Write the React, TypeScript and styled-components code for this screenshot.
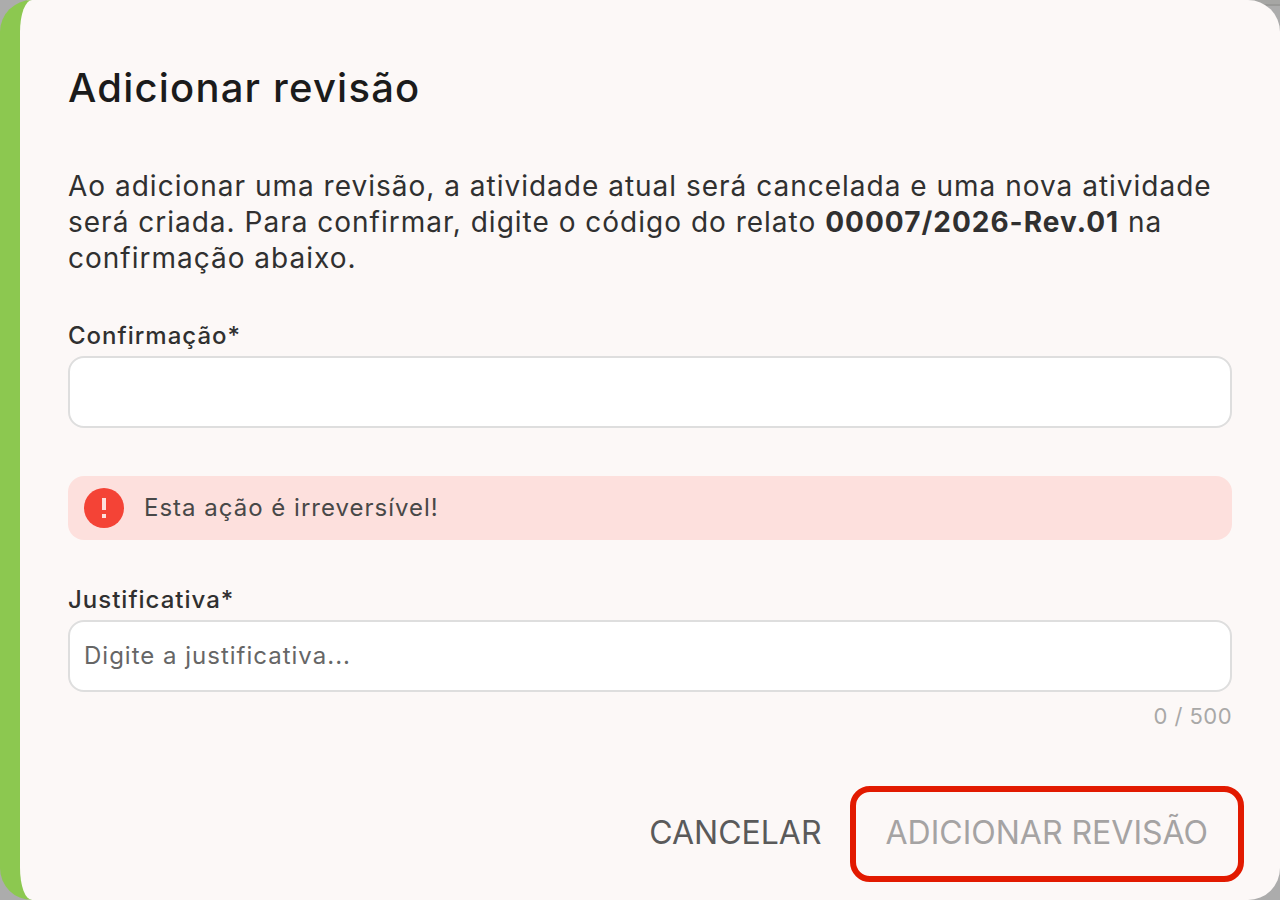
import React, { useState } from "react";
import styled, { createGlobalStyle } from "styled-components";

const GlobalStyle = createGlobalStyle`
  *, *::before, *::after { box-sizing: border-box; }
  body { margin: 0; background: #acacac; font-family: Inter, sans-serif; }
  h1, p { margin: 0; }
`;

const Backdrop = styled.div`
  background:
    linear-gradient(#a6a6a4 0 4px, #999997 4px 6px, transparent 6px) right top / 50% 6px no-repeat,
    #acacac;
`;

const Dialog = styled.form`
  display: flex;
  flex-direction: column;
  min-height: 100vh;
  padding: 60px 48px 18px;
  border-left: 20px solid #8cc850;
  border-radius: 32px;
  background: #fcf8f7;
  color: #303030;
  letter-spacing: 1px;
`;

const Title = styled.h1`
  margin-bottom: 52px;
  color: #1b1b1b;
  font-size: 40px;
  line-height: 56px;
  font-weight: 500;
  letter-spacing: 0.03em;
`;

const Message = styled.p`
  margin-bottom: 40px;
  font-size: 28px;
  line-height: 36px;
`;

const Field = styled.div`
  display: flex;
  flex-direction: column;
`;

const Label = styled.label`
  font-size: 24px;
  line-height: 40px;
  font-weight: 500;
`;

const TextInput = styled.input`
  width: 100%;
  height: 72px;
  padding: 0 14px 2px;
  border: 2px solid #dedede;
  border-radius: 16px;
  outline: none;
  background: #fff;
  color: #303030;
  font: 400 24px Inter, sans-serif;
  letter-spacing: 1px;
  &::placeholder { color: #666; opacity: 1; }
`;

const Counter = styled.span`
  align-self: flex-end;
  margin-top: 8px;
  color: #a9a8a7;
  font-size: 22px;
  line-height: 32px;
  letter-spacing: 0.02em;
`;

const Alert = styled.div`
  display: flex;
  align-items: center;
  gap: 20px;
  height: 64px;
  margin: 48px 0 40px;
  padding: 0 16px;
  border-radius: 16px;
  background: #fde0dd;
  color: #484848;
  font-size: 24px;
  line-height: 32px;
`;

const Actions = styled.div`
  display: flex;
  justify-content: flex-end;
  align-items: center;
  gap: 28px;
  margin: auto -12px 0 0;
`;

const Button = styled.button`
  padding: 0 0 4px;
  border: 0;
  background: transparent;
  color: #5a5a5a;
  font: 400 32px Inter, sans-serif;
`;

const SubmitButton = styled(Button)`
  height: 96px;
  padding: 0 30px 4px;
  border: 6px solid #e21a00;
  border-radius: 20px;
  color: #a5a3a3;
`;

export default function App() {
  const [code, setCode] = useState("");
  const [reason, setReason] = useState("");
  return (
    <Backdrop>
      <GlobalStyle />
      <Dialog role="dialog" aria-labelledby="title">
        <Title id="title">Adicionar revisão</Title>
        <Message>
          Ao adicionar uma revisão, a atividade atual será cancelada e uma nova atividade
          será criada. Para confirmar, digite o código do relato <b>00007/2026-Rev.01</b> na
          confirmação abaixo.
        </Message>
        <Field>
          <Label htmlFor="code">Confirmação*</Label>
          <TextInput id="code" value={code} onChange={(e) => setCode(e.target.value)} />
        </Field>
        <Alert role="alert">
          <svg width="40" height="40" viewBox="0 0 40 40" aria-hidden="true">
            <circle cx="20" cy="20" r="20" fill="#f44336" />
            <path d="M18 10h4v12h-4zM18 26h4v4h-4z" fill="#fde0dd" />
          </svg>
          Esta ação é irreversível!
        </Alert>
        <Field>
          <Label htmlFor="reason">Justificativa*</Label>
          <TextInput
            id="reason"
            maxLength={500}
            placeholder="Digite a justificativa..."
            value={reason}
            onChange={(e) => setReason(e.target.value)}
          />
          <Counter>{reason.length} / 500</Counter>
        </Field>
        <Actions>
          <Button type="button">CANCELAR</Button>
          <SubmitButton type="submit" disabled>ADICIONAR REVISÃO</SubmitButton>
        </Actions>
      </Dialog>
    </Backdrop>
  );
}
